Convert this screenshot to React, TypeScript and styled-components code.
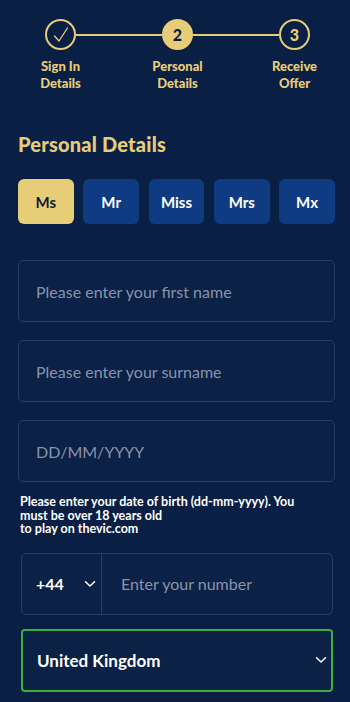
import styled, { createGlobalStyle } from 'styled-components';

const GlobalStyle = createGlobalStyle`
    * {
        box-sizing: border-box;
    }

    body {
        margin: 0;
        background: #0a1f44;
        font-family: Lato, "Noto Sans", "Liberation Sans", sans-serif;
    }
`;

const GOLD = '#e8cd78';
const NAVY = '#0a1f44';

const Page = styled.div`
    width: 350px;
    min-height: 702px;
    background: ${NAVY};
    padding: 19px 15px 10px 18px;
`;

const Stepper = styled.ol`
    list-style: none;
    margin: 0 0 0 -16px;
    padding: 0;
    display: grid;
    grid-template-columns: repeat(3, 117px);
`;

const Step = styled.li`
    position: relative;
    display: flex;
    flex-direction: column;
    align-items: center;

    &:not(:last-child)::after {
        content: '';
        position: absolute;
        top: 14.5px;
        left: calc(50% + 15.5px);
        width: calc(100% - 31px);
        height: 2px;
        background: ${GOLD};
    }
`;

const Circle = styled.div<{ $filled?: boolean }>`
    width: 31px;
    height: 31px;
    border-radius: 50%;
    border: 2px solid ${GOLD};
    background: ${(p) => (p.$filled ? GOLD : 'transparent')};
    color: ${(p) => (p.$filled ? NAVY : GOLD)};
    display: flex;
    align-items: center;
    justify-content: center;
    font-size: 16px;
    font-weight: 900;
`;

const StepLabel = styled.span`
    margin-top: 8px;
    color: ${GOLD};
    font-size: 13px;
    font-weight: 900;
    line-height: 17px;
    text-align: center;
`;

const Heading = styled.h2`
    margin: 39px 0 0;
    color: ${GOLD};
    font-size: 20px;
    font-weight: 900;
    letter-spacing: 0.2px;
    line-height: 26px;
`;

const Titles = styled.div`
    display: flex;
    gap: 9.5px;
    margin-top: 22px;
`;

const TitleButton = styled.button<{ $active?: boolean }>`
    flex: 1;
    height: 45px;
    border: none;
    border-radius: 6px;
    background: ${(p) => (p.$active ? GOLD : '#0f3b82')};
    color: ${(p) => (p.$active ? '#111a2e' : '#ffffff')};
    font-family: inherit;
    font-size: 15px;
    font-weight: 700;
    padding: 0;
`;

const Fields = styled.div`
    display: flex;
    flex-direction: column;
    gap: 18px;
    margin-top: 36px;
`;

const TextInput = styled.input`
    width: 100%;
    height: 62px;
    border: 1px solid #283e67;
    border-radius: 5px;
    background: #0b2146;
    padding: 0 17px;
    color: #ffffff;
    font-family: inherit;
    font-size: 16px;
    outline: none;

    &::placeholder {
        color: #8894ab;
    }
`;

const Hint = styled.p`
    margin: 13px 0 0 2px;
    color: #ffffff;
    font-size: 12.5px;
    font-weight: 700;
    line-height: 13.5px;
`;

const PhoneRow = styled.div`
    display: flex;
    height: 62px;
    margin: 17px 2px 0 3px;
    border: 1px solid #283e67;
    border-radius: 5px;
    background: #0b2146;
`;

const CodeSelect = styled.div`
    width: 80px;
    display: flex;
    align-items: center;
    justify-content: space-between;
    padding: 0 5px 0 14px;
    border-right: 1px solid #283e67;
    color: #ffffff;
    font-size: 16px;
    font-weight: 700;
`;

const PhoneInput = styled.input`
    flex: 1;
    min-width: 0;
    border: none;
    background: transparent;
    padding: 0 19px;
    color: #ffffff;
    font-family: inherit;
    font-size: 16px;
    outline: none;

    &::placeholder {
        color: #8894ab;
    }
`;

const CountrySelect = styled.div`
    display: flex;
    align-items: center;
    justify-content: space-between;
    height: 63px;
    margin: 14px 2px 0 3px;
    padding: 0 4px 0 14px;
    border: 2px solid #3cae3c;
    border-radius: 4px;
    background: #0b2146;
    color: #ffffff;
    font-size: 17px;
    font-weight: 700;
`;

function Chevron() {
    return (
        <svg width="12" height="8" viewBox="0 0 12 8" fill="none">
            <path d="M1.5 1.8 6 6 10.5 1.8" stroke="#ffffff" strokeWidth="1.5" strokeLinecap="round" strokeLinejoin="round" />
        </svg>
    );
}

function Check() {
    return (
        <svg width="18" height="18" viewBox="0 0 18 18" fill="none">
            <path d="M2.5 10 7 15 15.5 2" stroke={GOLD} strokeWidth="1.3" strokeLinecap="round" strokeLinejoin="round" />
        </svg>
    );
}

const titles = ['Ms', 'Mr', 'Miss', 'Mrs', 'Mx'];

export default function App() {
    return (
        <>
            <GlobalStyle />
            <Page>
                <Stepper>
                    <Step>
                        <Circle>
                            <Check />
                        </Circle>
                        <StepLabel>
                            Sign In
                            <br />
                            Details
                        </StepLabel>
                    </Step>
                    <Step>
                        <Circle $filled>2</Circle>
                        <StepLabel>
                            Personal
                            <br />
                            Details
                        </StepLabel>
                    </Step>
                    <Step>
                        <Circle>3</Circle>
                        <StepLabel>
                            Receive
                            <br />
                            Offer
                        </StepLabel>
                    </Step>
                </Stepper>

                <Heading>Personal Details</Heading>

                <Titles>
                    {titles.map((t) => (
                        <TitleButton key={t} $active={t === 'Ms'}>
                            {t}
                        </TitleButton>
                    ))}
                </Titles>

                <Fields>
                    <TextInput placeholder="Please enter your first name" />
                    <TextInput placeholder="Please enter your surname" />
                    <TextInput placeholder="DD/MM/YYYY" />
                </Fields>

                <Hint>
                    Please enter your date of birth (dd-mm-yyyy). You
                    <br />
                    must be over 18 years old
                    <br />
                    to play on thevic.com
                </Hint>

                <PhoneRow>
                    <CodeSelect>
                        +44
                        <Chevron />
                    </CodeSelect>
                    <PhoneInput placeholder="Enter your number" />
                </PhoneRow>

                <CountrySelect>
                    United Kingdom
                    <Chevron />
                </CountrySelect>
            </Page>
        </>
    );
}
